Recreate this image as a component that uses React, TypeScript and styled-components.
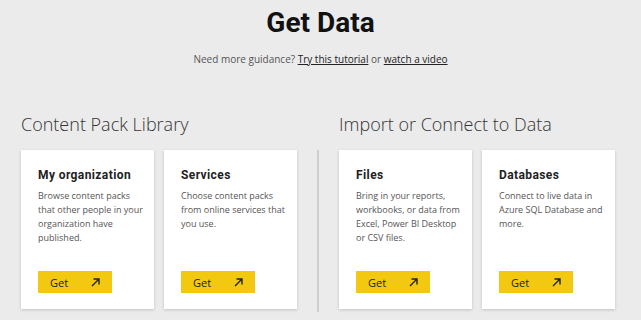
import React from "react";
import styled, { createGlobalStyle } from "styled-components";

const Global = createGlobalStyle`
  html, body { margin: 0; padding: 0; background: #ebebeb; }
  body { font-family: "Open Sans", "Noto Sans", sans-serif; }
`;

const Page = styled.div`
  width: 641px;
  height: 320px;
  background: #ebebeb;
  overflow: hidden;
  display: flex;
  flex-direction: column;
`;

const Header = styled.header`
  display: flex;
  flex-direction: column;
  align-items: center;
  padding-top: 6px;
`;

const Title = styled.h1`
  margin: 0;
  font-family: Roboto, "DejaVu Sans", sans-serif;
  font-weight: 700;
  font-size: 28px;
  line-height: 34px;
  color: #111;
`;

const Guidance = styled.p`
  margin: 12px 0 0 0;
  font-size: 10px;
  line-height: 14px;
  color: #555;
`;

const Link = styled.a`
  color: #222;
  text-decoration: underline;
`;

const Body = styled.div`
  display: flex;
  align-items: stretch;
  padding: 46px 0 0 21px;
  gap: 20px;
`;

const Section = styled.section`
  display: flex;
  flex-direction: column;
`;

const SectionTitle = styled.h2`
  margin: 0 0 14px 0;
  font-family: "Open Sans", "Noto Sans", sans-serif;
  font-weight: 300;
  font-size: 18px;
  line-height: 24px;
  color: #333;
`;

const Cards = styled.div`
  display: flex;
  gap: 10px;
`;

const Divider = styled.div`
  width: 2px;
  background: #cfcfcf;
  margin-top: 38px;
  height: 162px;
`;

const Card = styled.div`
  width: 133px;
  height: 159px;
  box-sizing: border-box;
  background: #fff;
  box-shadow: 0 1px 3px rgba(0, 0, 0, 0.18);
  padding: 17px 8px 16px 17px;
  display: flex;
  flex-direction: column;
`;

const CardTitle = styled.h3`
  margin: 0;
  font-family: Roboto, "DejaVu Sans", sans-serif;
  font-weight: 700;
  font-size: 12px;
  line-height: 16px;
  letter-spacing: 0.4px;
  color: #222;
`;

const CardText = styled.p`
  margin: 6px 0 0 0;
  font-size: 9px;
  line-height: 14px;
  color: #555;
`;

const GetButton = styled.button`
  margin-top: auto;
  width: 74px;
  height: 22px;
  border: none;
  background: #f2c811;
  display: flex;
  align-items: center;
  justify-content: space-between;
  padding: 0 12px 0 12px;
  font-family: "Open Sans", "Noto Sans", sans-serif;
  font-size: 11px;
  color: #222;
  cursor: pointer;
`;

const Arrow = () => (
  <svg width="9" height="9" viewBox="0 0 9 9" fill="none">
    <path d="M1 8 L8 1 M2.5 1 H8 V6.5" stroke="#222" strokeWidth="1.4" />
  </svg>
);

type CardData = { title: string; text: string };

const library: CardData[] = [
  {
    title: "My organization",
    text: "Browse content packs that other people in your organization have published.",
  },
  {
    title: "Services",
    text: "Choose content packs from online services that you use.",
  },
];

const connect: CardData[] = [
  {
    title: "Files",
    text: "Bring in your reports, workbooks, or data from Excel, Power BI Desktop or CSV files.",
  },
  {
    title: "Databases",
    text: "Connect to live data in Azure SQL Database and more.",
  },
];

const DataCard = ({ title, text }: CardData) => (
  <Card>
    <CardTitle>{title}</CardTitle>
    <CardText>{text}</CardText>
    <GetButton>
      <span>Get</span>
      <Arrow />
    </GetButton>
  </Card>
);

export default function App() {
  return (
    <Page>
      <Global />
      <Header>
        <Title>Get Data</Title>
        <Guidance>
          Need more guidance? <Link>Try this tutorial</Link> or <Link>watch a video</Link>
        </Guidance>
      </Header>
      <Body>
        <Section>
          <SectionTitle>Content Pack Library</SectionTitle>
          <Cards>
            {library.map((c) => (
              <DataCard key={c.title} {...c} />
            ))}
          </Cards>
        </Section>
        <Divider />
        <Section>
          <SectionTitle>Import or Connect to Data</SectionTitle>
          <Cards>
            {connect.map((c) => (
              <DataCard key={c.title} {...c} />
            ))}
          </Cards>
        </Section>
      </Body>
    </Page>
  );
}
